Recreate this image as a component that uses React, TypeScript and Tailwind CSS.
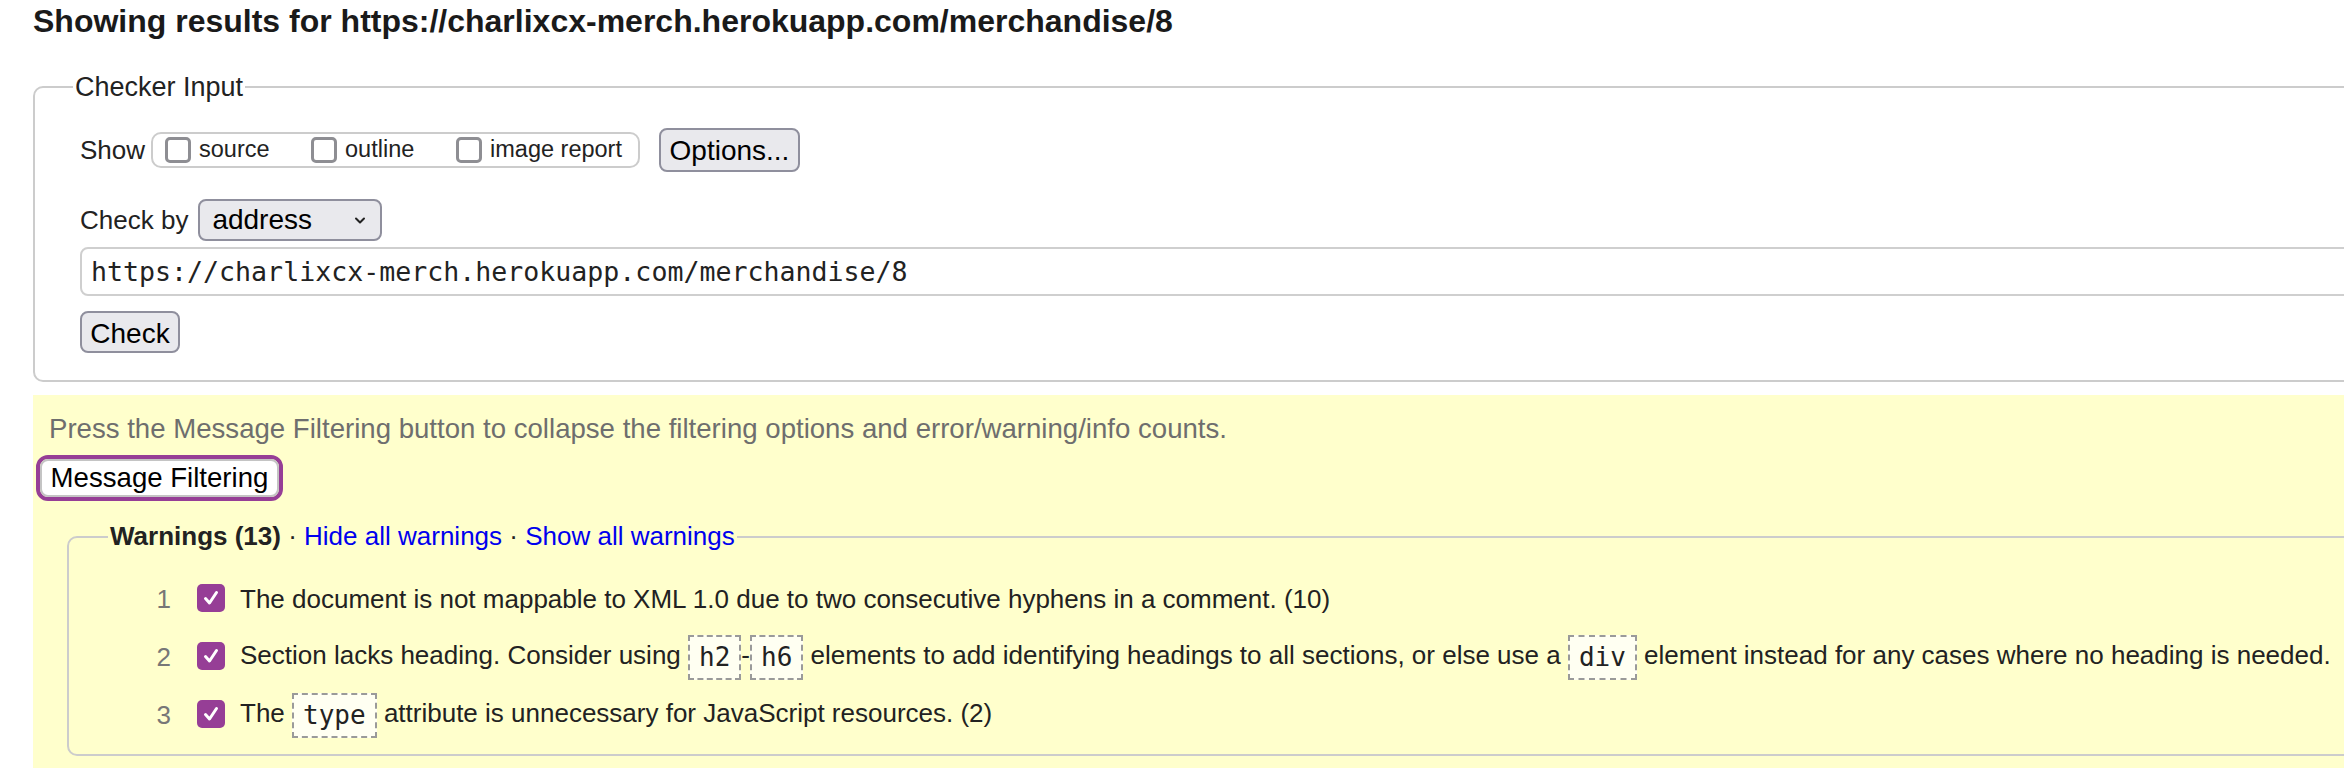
import React from "react";

const sans = { fontFamily: '"Liberation Sans", Arial, Helvetica, sans-serif' };

function GrayBox() {
  return <span className="inline-block w-[26px] h-[26px] border-[3px] border-[#8e8e93] rounded-[5px] bg-white shrink-0" />;
}

function PurpleCheck() {
  return (
    <span className="inline-flex items-center justify-center w-[28px] h-[28px] rounded-[5px] bg-[#963e96] shrink-0">
      <svg width="20" height="20" viewBox="0 0 20 20" fill="none">
        <path d="M4.5 10.5 L8.5 15 L15.5 4.5" stroke="white" strokeWidth="3" strokeLinecap="round" strokeLinejoin="round" />
      </svg>
    </span>
  );
}

function Code({ children }: { children: React.ReactNode }) {
  return (
    <span className="inline-block align-middle h-[45px] leading-[41px] px-[9px] border-2 border-dashed border-[#9a9a9a] bg-[#fffff2] text-[26px] text-[#222]" style={{ fontFamily: '"DejaVu Sans Mono", "Liberation Mono", monospace' }}>
      {children}
    </span>
  );
}

function Row({ n, children }: { n: number; children: React.ReactNode }) {
  return (
    <div className="flex items-center h-[58px]">
      <span className="w-[102px] text-right text-[26px] text-[#777]">{n}</span>
      <span className="ml-[26px]"><PurpleCheck /></span>
      <span className="ml-[15px] text-[26px] text-[#222] leading-[30px] whitespace-nowrap">{children}</span>
    </div>
  );
}

export default function App() {
  return (
    <div className="w-[2344px] h-[768px] overflow-hidden bg-white" style={sans}>
      <div className="w-[2700px] pl-[33px]">
        <div className="pt-[3px] text-[32px] leading-[37px] font-bold text-[#1a1a1a] whitespace-nowrap">
          Showing results for https://charlixcx-merch.herokuapp.com/merchandise/8
        </div>

        <fieldset className="mt-[31px] border-2 border-[#cccccc] rounded-[10px] pt-[25px] pb-[27px]">
          <legend className="ml-[38px] px-[2px] text-[27px] leading-[32px] text-[#222]">Checker Input</legend>

          <div className="pl-[45px] pr-[40px]">
            <div className="flex items-center h-[44px] text-[26px] text-[#222]">
              <span>Show</span>
              <div className="ml-[6px] h-[36px] border-2 border-[#cccccc] rounded-[10px] flex items-center pl-[12px] pr-[16px]">
                <div className="flex items-center w-[146px]">
                  <GrayBox />
                  <span className="ml-[8px] text-[23.5px]">source</span>
                </div>
                <div className="flex items-center w-[145px]">
                  <GrayBox />
                  <span className="ml-[8px] text-[23.5px]">outline</span>
                </div>
                <div className="flex items-center">
                  <GrayBox />
                  <span className="ml-[8px] text-[23.5px]">image report</span>
                </div>
              </div>
              <button className="ml-[19px] h-[44px] w-[141px] bg-[#e9e9ed] border-2 border-[#8f8f9d] rounded-[8px] text-[28px] text-black" style={sans}>
                Options...
              </button>
            </div>

            <div className="flex items-center mt-[27px] h-[42px] text-[26px] text-[#222]">
              <span>Check by</span>
              <div className="ml-[10px] h-[42px] w-[184px] bg-[#e9e9ed] border-2 border-[#8f8f9d] rounded-[8px] flex items-center pl-[12px] pr-[14px] text-black text-[28px]">
                <span className="flex-1">address</span>
                <svg width="12" height="9" viewBox="0 0 12 9" fill="none">
                  <path d="M2 2.5 L6 6.5 L10 2.5" stroke="#222" strokeWidth="2" strokeLinecap="round" strokeLinejoin="round" />
                </svg>
              </div>
            </div>

            <div className="mt-[6px] h-[49px] border-2 border-[#cfcfcf] rounded-[8px] flex items-center pl-[9px] text-[26.6px] text-[#222]" style={{ fontFamily: '"DejaVu Sans Mono", "Liberation Mono", monospace' }}>
              https://charlixcx-merch.herokuapp.com/merchandise/8
            </div>

            <button className="mt-[15px] h-[42px] w-[100px] bg-[#e9e9ed] border-2 border-[#8f8f9d] rounded-[8px] text-[28px] text-black" style={sans}>
              Check
            </button>
          </div>
        </fieldset>

        <div className="mt-[13px] bg-[#ffffcc] h-[400px]">
          <p className="pt-[18px] pl-[16px] text-[27.6px] leading-[31px] text-[#6e6e6e] whitespace-nowrap">
            Press the Message Filtering button to collapse the filtering options and error/warning/info counts.
          </p>
          <div className="mt-[11px] ml-[3px] inline-block border-[4px] border-[#963e96] rounded-[12px]">
            <button className="h-[38px] w-[239px] bg-white border-2 border-[#c4c4c4] rounded-[8px] text-[27.6px] leading-[34px] text-black" style={sans}>
              Message Filtering
            </button>
          </div>

          <fieldset className="mt-[20px] ml-[34px] border-2 border-[#cccccc] rounded-[10px] pt-[18px] pb-[10px]">
            <legend className="ml-[39px] px-[2px] text-[26px] leading-[31px] text-[#222] whitespace-nowrap">
              <span className="font-bold">Warnings (13)</span>
              <span> · </span>
              <span className="text-[#0000ee]">Hide all warnings</span>
              <span> · </span>
              <span className="text-[#0000ee]">Show all warnings</span>
            </legend>
            <Row n={1}>The document is not mappable to XML 1.0 due to two consecutive hyphens in a comment. (10)</Row>
            <Row n={2}>
              Section lacks heading. Consider using <Code>h2</Code>-<Code>h6</Code> elements to add identifying headings to all sections, or else use a <Code>div</Code> element instead for any cases where no heading is needed.
            </Row>
            <Row n={3}>
              The <Code>type</Code> attribute is unnecessary for JavaScript resources. (2)
            </Row>
          </fieldset>
        </div>
      </div>
    </div>
  );
}
